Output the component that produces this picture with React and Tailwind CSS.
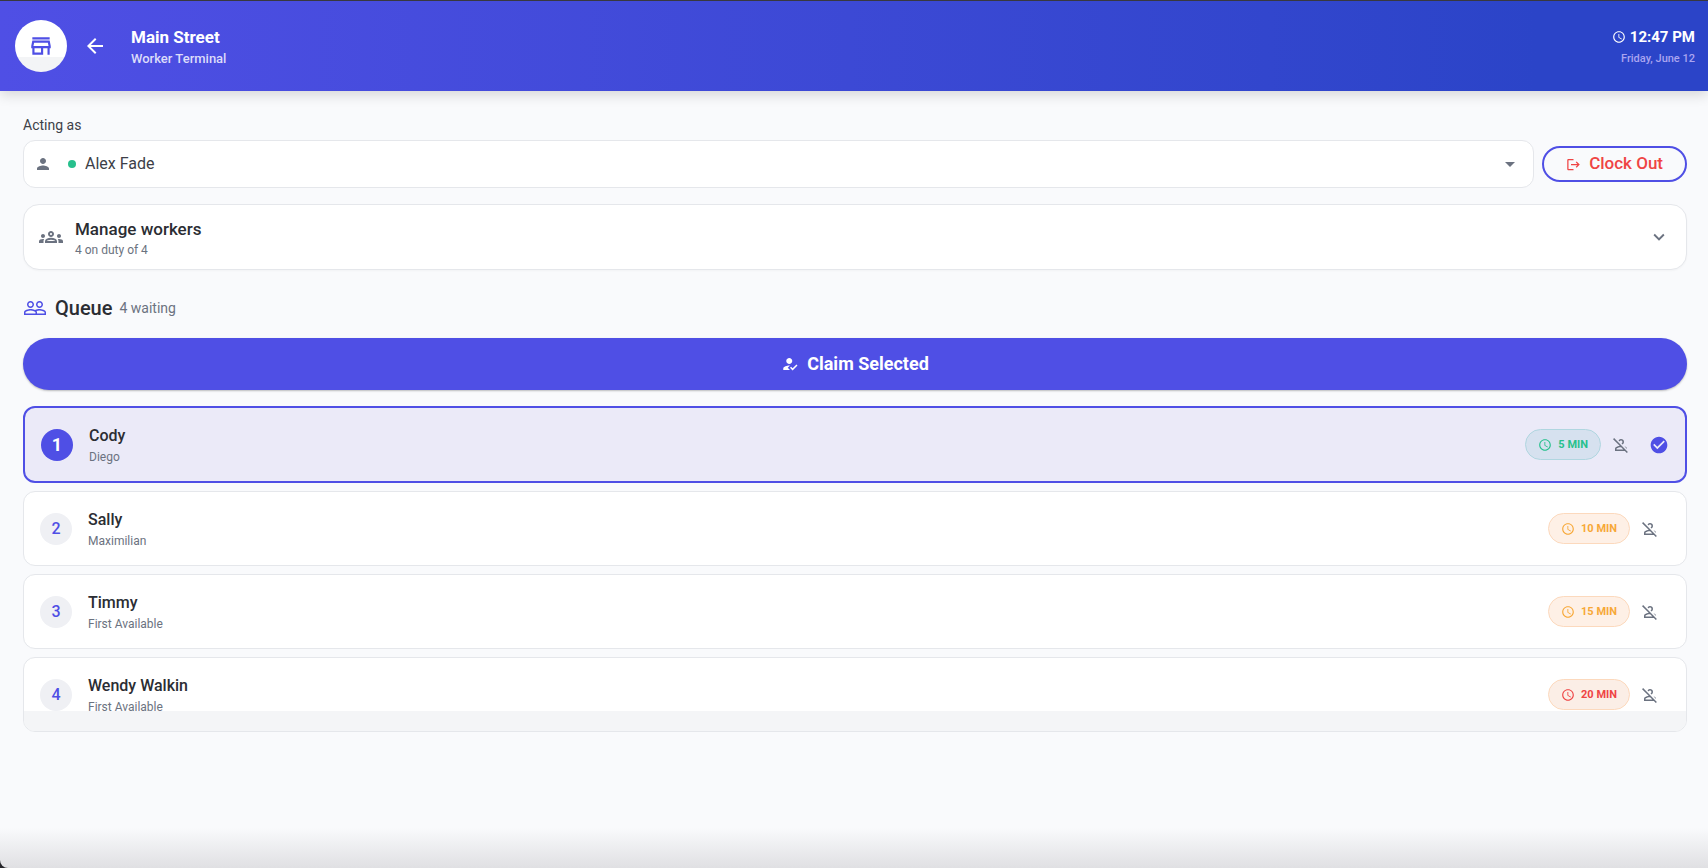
import {
  MdAccessTime,
  MdArrowBack,
  MdArrowDropDown,
  MdCheckCircle,
  MdExpandMore,
  MdHowToReg,
  MdLogout,
  MdOutlineGroups,
  MdOutlinePersonOff,
  MdOutlineStore,
  MdPeopleOutline,
  MdPerson,
} from 'react-icons/md';

const queue = [
  { name: 'Cody', worker: 'Diego', wait: 5, level: 'short' },
  { name: 'Sally', worker: 'Maximilian', wait: 10, level: 'medium' },
  { name: 'Timmy', worker: 'First Available', wait: 15, level: 'medium' },
  { name: 'Wendy Walkin', worker: 'First Available', wait: 20, level: 'long' },
];

const waitStyles = {
  short: 'bg-[#d6e1ef] border-[#b0d6e0] text-[#27c08d]',
  medium: 'bg-[#fef0e6] border-[#fcd9bd] text-[#f7a838]',
  long: 'bg-[#fbeee6] border-[#fcd9bd] text-[#ef4444]',
};

function Header() {
  return (
    <header className="relative z-10 flex items-center border-t border-[#38383f] bg-linear-to-r from-[#4f4fe5] to-[#2b44c8] to-90% pl-[15px] pr-[13px] py-[19px] text-white shadow-[0_4px_12px_rgba(0,0,0,0.14)]">
      <div className="flex size-[52px] items-center justify-center rounded-full bg-linear-to-b from-white from-72% to-[#f3f4f6] to-72% text-[#4f4fe5]">
        <MdOutlineStore size={26} />
      </div>
      <button aria-label="Back" className="ml-4 flex size-6 items-center justify-center">
        <MdArrowBack size={24} />
      </button>
      <div className="ml-6 flex-1 pt-0.5">
        <h1 className="text-[17px] leading-6 font-bold">Main Street</h1>
        <p className="text-[13px] leading-5 font-medium text-[#dcdcfa]">Worker Terminal</p>
      </div>
      <div className="pt-0.5 text-right">
        <p className="flex items-center justify-end gap-1 text-[15px] leading-6 font-bold">
          <MdAccessTime size={14} />
          12:47 PM
        </p>
        <p className="text-[11px] leading-5 font-medium text-[#aaa5f0]">Friday, June 12</p>
      </div>
    </header>
  );
}

function WorkerPicker() {
  return (
    <section>
      <label htmlFor="worker" className="block text-sm leading-5 text-[#3d3f48]">
        Acting as
      </label>
      <div className="mt-[5px] flex items-center gap-2">
        <div className="relative flex-1">
          <MdPerson size={18} className="pointer-events-none absolute left-[11px] top-[15px] text-[#6b7280]" />
          <span className="pointer-events-none absolute left-[45px] top-5 size-2 rounded-full bg-[#27c08d]" />
          <select
            id="worker"
            className="block h-12 w-full appearance-none rounded-xl border border-[#e5e7eb] bg-white pl-[61px] pr-12 text-base text-[#3d3f48]"
          >
            <option>Alex Fade</option>
          </select>
          <MdArrowDropDown size={24} className="pointer-events-none absolute right-3 top-3 text-[#6b7280]" />
        </div>
        <button className="flex h-9 items-center gap-2 rounded-full border-2 border-[#4f4fe5] px-[22px] text-[17px] font-medium text-[#ef4444]">
          <MdLogout size={15} />
          Clock Out
        </button>
      </div>
    </section>
  );
}

function ManageWorkers() {
  return (
    <button className="mt-4 flex w-full items-center rounded-2xl border border-[#e5e7eb] bg-white pl-[15px] pr-4 text-left shadow-[0_1px_2px_rgba(0,0,0,0.03)]">
      <MdOutlineGroups size={24} className="text-[#6b7280]" />
      <span className="ml-3 flex-1 pt-[13px] pb-2">
        <span className="block text-[17px] leading-[22px] font-medium text-[#2b2d33]">Manage workers</span>
        <span className="block text-xs leading-[21px] text-[#6b7280]">4 on duty of 4</span>
      </span>
      <MdExpandMore size={22} className="text-[#6b7280]" />
    </button>
  );
}

function QueueItem({ position, name, worker, wait, level, selected, last }) {
  return (
    <li
      className={`relative flex items-center overflow-hidden rounded-xl px-4 py-[15px] ${
        selected ? 'border-2 border-[#4f4fe5] bg-[#ebeaf8]' : 'border border-[#e5e7eb] bg-white'
      }`}
    >
      <span
        className={`flex size-8 items-center justify-center rounded-full ${
          selected ? 'bg-[#4f4fe5] text-lg font-bold text-white' : 'bg-[#eff0f4] text-base font-medium text-[#4f4fe5]'
        }`}
      >
        {position}
      </span>
      <div className="ml-4 flex-1">
        <h3 className="text-base leading-[25px] font-medium text-[#2b2d33]">{name}</h3>
        <p className="text-xs leading-[18px] text-[#6b7280]">{worker}</p>
      </div>
      <span
        className={`flex h-[31px] items-center gap-1.5 rounded-full border px-3 text-[11px] leading-[15px] font-bold ${waitStyles[level]}`}
      >
        <MdAccessTime size={14} />
        {wait} MIN
      </span>
      <button aria-label={`Remove ${name}`} className="flex h-8 w-10 items-center justify-center text-[#6b7280]">
        <MdOutlinePersonOff size={18} />
      </button>
      {selected && <MdCheckCircle size={20} className="ml-2 text-[#4f4fe5]" />}
      {last && <span className="absolute inset-x-0 bottom-0 h-5 bg-[#f4f5f7]" />}
    </li>
  );
}

function Queue() {
  return (
    <section className="mt-6">
      <div className="flex items-center">
        <MdPeopleOutline size={24} className="text-[#4f4fe5]" />
        <h2 className="ml-2 text-xl leading-7 font-medium text-[#2b2d33]">Queue</h2>
        <span className="ml-[7px] text-sm text-[#6b7280]">4 waiting</span>
      </div>
      <button className="mt-4 flex h-[52px] w-full items-center justify-center gap-2 rounded-full bg-[#4f4fe5] text-lg font-bold text-white shadow-[0_1px_2px_rgba(0,0,0,0.25)]">
        <MdHowToReg size={18} />
        Claim Selected
      </button>
      <ul className="mt-4 flex flex-col gap-2">
        {queue.map((item, i) => (
          <QueueItem
            key={item.name}
            {...item}
            position={i + 1}
            selected={i === 0}
            last={i === queue.length - 1}
          />
        ))}
      </ul>
    </section>
  );
}

export default function App() {
  return (
    <div className="min-h-screen bg-[#26262b] font-[Roboto,sans-serif]">
      <div className="flex min-h-screen flex-col rounded-bl-lg bg-[#f9fafc] bg-linear-to-t from-[#e0e0e3] to-transparent to-[40px]">
        <Header />
        <main className="pt-6 pl-[23px] pr-[21px] pb-10">
          <WorkerPicker />
          <ManageWorkers />
          <Queue />
        </main>
      </div>
    </div>
  );
}
